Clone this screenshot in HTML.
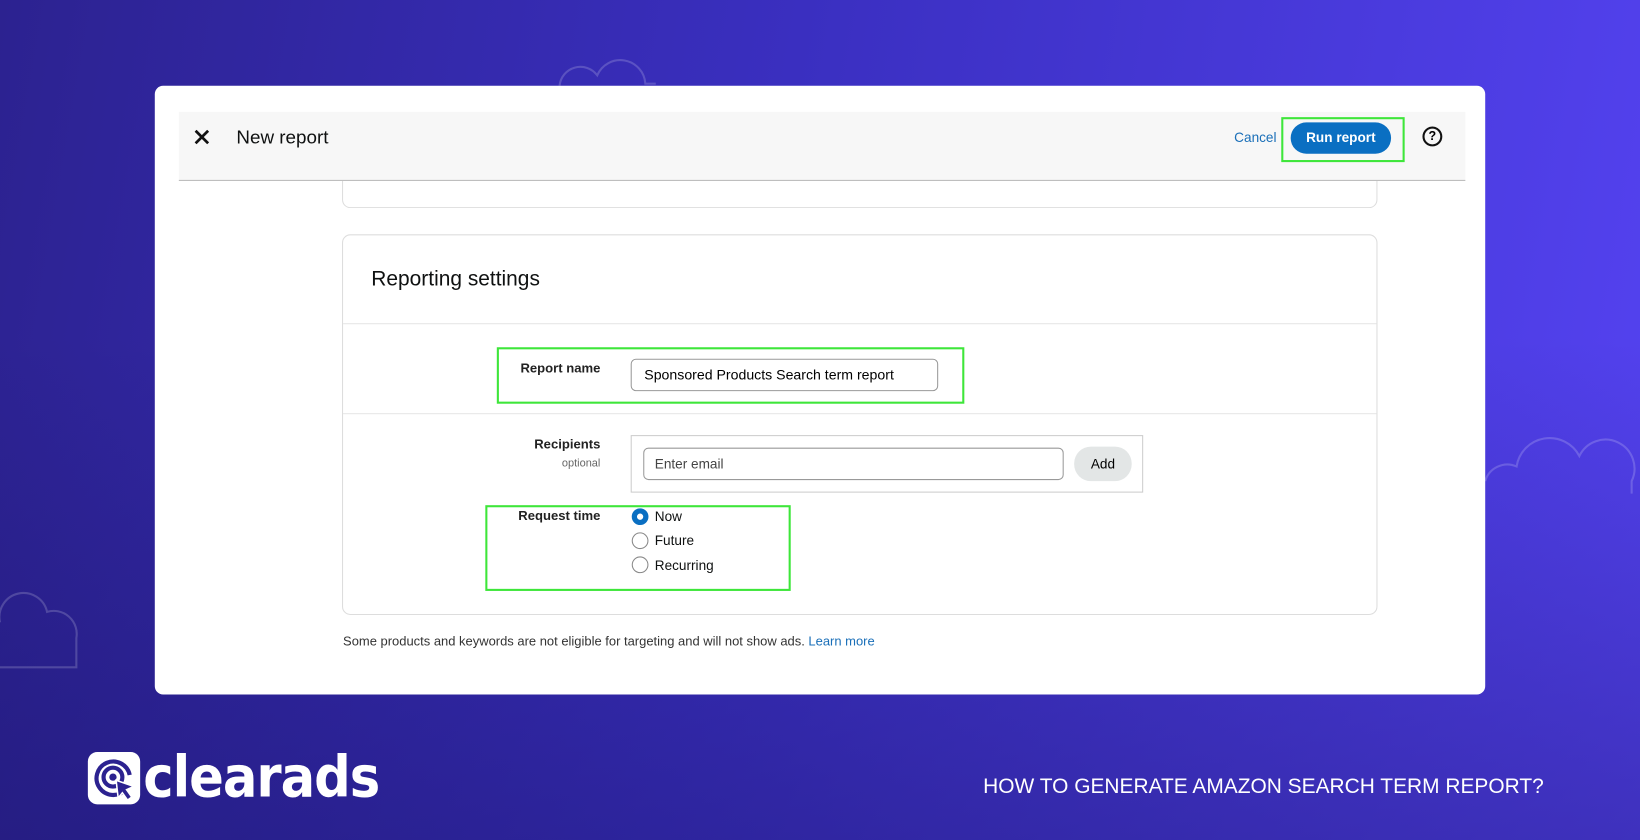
<!DOCTYPE html>
<html><head><meta charset="utf-8"><style>
*{box-sizing:border-box;margin:0;padding:0}
html,body{width:1640px;height:840px;overflow:hidden}
body{background:linear-gradient(100deg,#2c2290 0%,#3a2fc0 45%,#5543f2 100%);font-family:"Liberation Sans",sans-serif;position:relative}
#s{position:absolute;left:0;top:0;width:1568px;height:803px;transform:scale(1.04592);transform-origin:0 0}
.a{position:absolute}
.t{position:absolute;white-space:nowrap;color:#0f1111}
.g{position:absolute;border:2px solid #3ee63a}
.l{font-size:12.5px;font-weight:bold;color:#222}
</style></head><body>
<div style="position:absolute;inset:0;background:linear-gradient(180deg,rgba(0,0,0,0) 40%,rgba(20,15,90,.35) 100%)"></div>
<div id="s">
<svg class="a" style="left:0;top:0" width="1568" height="803">
<g fill="none" stroke="rgba(255,255,255,0.18)" stroke-width="2">
<path d="M535 82 a20 20 0 0 1 36-10 a24 24 0 0 1 46 8 h10"/>
<path d="M1420 460 a22 22 0 0 1 30-14 a32 32 0 0 1 60-10 a26 26 0 0 1 50 24 v12"/>
<path d="M0 595 a20 20 0 0 1 45-10 a22 22 0 0 1 28 25 v28 h-73"/>
</g></svg>
<div class="a" style="left:148px;top:82px;width:1272px;height:582px;background:#fff;border-radius:8px"></div>
<div class="a" style="left:171px;top:107px;width:1230px;height:66px;background:#f7f7f7;border-bottom:1px solid #bbb"></div>
<svg class="a" style="left:186px;top:124px" width="14" height="14"><path d="M1 1 L13 13 M13 1 L1 13" stroke="#111" stroke-width="2.6"/></svg>
<div class="t" style="left:226px;top:121px;font-size:18px">New report</div>
<div class="t" style="left:1180px;top:124px;font-size:13px;color:#1a6fb8">Cancel</div>
<div class="a" style="left:1234px;top:117px;width:96px;height:30px;background:#0a6fc2;border-radius:15px;color:#fff;font-size:13px;font-weight:bold;text-align:center;line-height:30px">Run report</div>
<div class="g" style="left:1225px;top:112px;width:118px;height:43px"></div>
<div class="a" style="left:1360px;top:121px;width:19px;height:19px;border:2px solid #111;border-radius:50%;font-size:12px;font-weight:bold;text-align:center;line-height:15px">?</div>
<div class="a" style="left:327px;top:173px;width:990px;height:26px;border:1px solid #ddd;border-top:none;border-radius:0 0 8px 8px"></div>
<div class="a" style="left:327px;top:224px;width:990px;height:364px;border:1px solid #ddd;border-radius:8px"></div>
<div class="t" style="left:355px;top:256px;font-size:20px">Reporting settings</div>
<div class="a" style="left:328px;top:309px;width:988px;height:1px;background:#e6e6e6"></div>
<div class="a" style="left:328px;top:395px;width:988px;height:1px;background:#e6e6e6"></div>
<div class="t l" style="left:474px;width:100px;text-align:right;top:345px">Report name</div>
<div class="a" style="left:603px;top:343px;width:294px;height:31px;border:1px solid #999;border-radius:5px;font-size:13.5px;padding-left:12px;line-height:29px">Sponsored Products Search term report</div>
<div class="g" style="left:475px;top:332px;width:447px;height:54px"></div>
<div class="t l" style="left:474px;width:100px;text-align:right;top:418px">Recipients</div>
<div class="t" style="left:474px;width:100px;text-align:right;top:437px;font-size:10.5px;color:#666">optional</div>
<div class="a" style="left:603px;top:416px;width:490px;height:55px;border:1px solid #ccc"></div>
<div class="a" style="left:615px;top:428px;width:402px;height:31px;border:1px solid #999;border-radius:5px;font-size:13px;color:#444;padding-left:10px;line-height:29px">Enter email</div>
<div class="a" style="left:1027px;top:427px;width:55px;height:33px;background:#e3e6e6;border-radius:16px;font-size:13px;text-align:center;line-height:33px">Add</div>
<div class="t l" style="left:474px;width:100px;text-align:right;top:486px">Request time</div>
<div class="a" style="left:604px;top:486px;width:16px;height:16px;border-radius:50%;border:5px solid #0a6fc2;background:#fff"></div>
<div class="a" style="left:604px;top:509px;width:16px;height:16px;border-radius:50%;border:1px solid #888"></div>
<div class="a" style="left:604px;top:532px;width:16px;height:16px;border-radius:50%;border:1px solid #888"></div>
<div class="t" style="left:626px;top:486px;font-size:13px">Now</div>
<div class="t" style="left:626px;top:509px;font-size:13px">Future</div>
<div class="t" style="left:626px;top:533px;font-size:13px">Recurring</div>
<div class="g" style="left:464px;top:483px;width:292px;height:82px"></div>
<div class="t" style="left:328px;top:606px;font-size:12.4px;color:#333">Some products and keywords are not eligible for targeting and will not show ads. <span style="color:#1a6fb8">Learn more</span></div>
<div class="a" style="left:84px;top:719px;width:50px;height:50px;background:#fff;border-radius:9px"></div>
<svg class="a" style="left:84px;top:719px" width="50" height="50"><g fill="none" stroke="#2c2290" stroke-width="4"><path d="M36 36 A16 16 0 1 1 40 22"/><circle cx="24" cy="24" r="9"/></g><circle cx="24" cy="24" r="3.5" fill="#2c2290"/><path d="M27 27 L44 33 L37 36 L42 43 L38 46 L33 39 L29 44 Z" fill="#2c2290" stroke="#fff" stroke-width="1.5"/></svg>
<div class="t" style="left:137px;top:718px;font-size:49px;font-weight:bold;color:#fff;letter-spacing:-1px;font-family:'DejaVu Sans',sans-serif;transform:scaleY(1.12);transform-origin:0 100%">clearads</div>
<div class="t" style="left:940px;top:741px;font-size:20px;color:#fff">HOW TO GENERATE AMAZON SEARCH TERM REPORT?</div>
</div>
</body></html>
